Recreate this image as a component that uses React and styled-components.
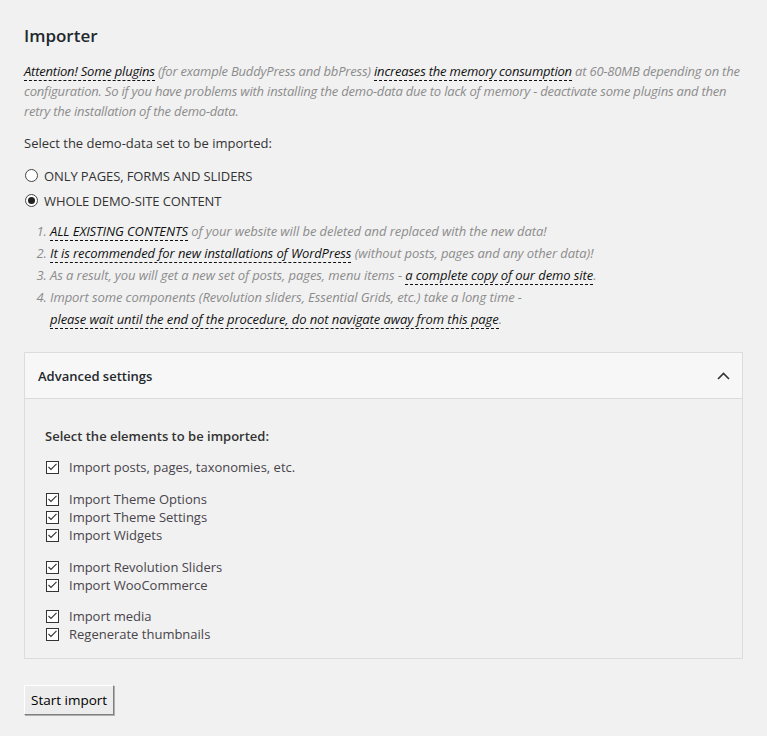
import React from "react";
import styled, { createGlobalStyle } from "styled-components";

const GlobalStyle = createGlobalStyle`
  body {
    margin: 0;
    background: #f1f1f1;
    font-family: "Open Sans", "Noto Sans", sans-serif;
    font-size: 13px;
    color: #333;
  }
`;

const Page = styled.div`
  padding: 24px 24px 20px;
`;

const Title = styled.h2`
  margin: 0;
  font-size: 17px;
  line-height: 24px;
  font-weight: 600;
  color: #23282d;
`;

const Note = styled.p`
  margin: 13px 0 0;
  font-style: italic;
  line-height: 20px;
  letter-spacing: -0.2px;
  color: #8c8c8c;
`;

const Mark = styled.span`
  color: #111;
  border-bottom: 1px dashed #111;
`;

const Label = styled.div`
  margin-top: ${(p) => p.$top ?? 12}px;
  line-height: 20px;
  font-weight: ${(p) => (p.$bold ? 600 : 400)};
  color: #333;
`;

const RadioList = styled.div`
  margin-top: 10px;
  display: flex;
  flex-direction: column;
`;

const RadioRow = styled.label`
  display: flex;
  align-items: center;
  gap: 6px;
  height: 25px;
  margin-left: 1px;
  text-transform: uppercase;
  letter-spacing: -0.1px;
  color: #333;
`;

const RadioDot = styled.span`
  width: 11px;
  height: 11px;
  border: 1px solid #444;
  border-radius: 50%;
  background: #fff;
  display: flex;
  align-items: center;
  justify-content: center;
  &::after {
    content: "";
    width: 7px;
    height: 7px;
    border-radius: 50%;
    background: #222;
    display: ${(p) => (p.$on ? "block" : "none")};
  }
`;

const Steps = styled.ol`
  margin: 7px 0 0;
  padding-left: 26px;
  font-style: italic;
  line-height: 22px;
  letter-spacing: -0.08px;
  color: #8c8c8c;
`;

const Panel = styled.section`
  margin-top: 22px;
  border: 1px solid #dcdcdc;
`;

const PanelHead = styled.div`
  display: flex;
  align-items: center;
  justify-content: space-between;
  padding: 13px 12px 12px 13px;
  line-height: 20px;
  font-weight: 600;
  color: #23282d;
  background: #f7f7f7;
  border-bottom: 1px solid #dcdcdc;
`;

const PanelBody = styled.div`
  padding: 27px 20px 15px;
`;

const Group = styled.div`
  margin-top: ${(p) => p.$top}px;
`;

const CheckRow = styled.label`
  display: flex;
  align-items: center;
  gap: 10px;
  height: 18px;
  margin-left: 1px;
  color: #48444c;
`;

const Box = styled.span`
  width: 11px;
  height: 11px;
  border: 1px solid #333;
  background: #fff;
  display: flex;
  align-items: center;
  justify-content: center;
`;

const Button = styled.button`
  margin-top: 26px;
  padding: 0 6px;
  height: 30px;
  font-family: inherit;
  font-size: 13.5px;
  color: #000;
  background: #ececec;
  border: 1px solid;
  border-color: #fff #808080 #808080 #fff;
  box-shadow: 1px 1px 0 #b0b0b0;
`;

function Check({ children }) {
  return (
    <CheckRow>
      <Box>
        <svg width="9" height="8" viewBox="0 0 9 8">
          <polyline points="0.5,4 3,6.5 8.5,0.8" fill="none" stroke="#333" strokeWidth="1.1" />
        </svg>
      </Box>
      {children}
    </CheckRow>
  );
}

const groups = [
  [12, ["Import posts, pages, taxonomies, etc."]],
  [14, ["Import Theme Options", "Import Theme Settings", "Import Widgets"]],
  [14, ["Import Revolution Sliders", "Import WooCommerce"]],
  [13, ["Import media", "Regenerate thumbnails"]],
];

export default function App() {
  return (
    <>
      <GlobalStyle />
      <Page>
        <Title>Importer</Title>
        <Note>
          <Mark>Attention! Some plugins</Mark> (for example BuddyPress and bbPress){" "}
          <Mark>increases the memory consumption</Mark> at 60-80MB depending on the
          configuration. So if you have problems with installing the demo-data due to lack
          of memory - deactivate some plugins and then retry the installation of the
          demo-data.
        </Note>
        <Label>Select the demo-data set to be imported:</Label>
        <RadioList>
          <RadioRow>
            <RadioDot />
            Only pages, forms and sliders
          </RadioRow>
          <RadioRow>
            <RadioDot $on />
            Whole demo-site content
          </RadioRow>
        </RadioList>
        <Steps>
          <li>
            <Mark>ALL EXISTING CONTENTS</Mark> of your website will be deleted and replaced
            with the new data!
          </li>
          <li>
            <Mark>It is recommended for new installations of WordPress</Mark> (without posts,
            pages and any other data)!
          </li>
          <li>
            As a result, you will get a new set of posts, pages, menu items -{" "}
            <Mark>a complete copy of our demo site</Mark>.
          </li>
          <li>
            Import some components (Revolution sliders, Essential Grids, etc.) take a long
            time -<br />
            <Mark>please wait until the end of the procedure, do not navigate away from this page</Mark>.
          </li>
        </Steps>
        <Panel>
          <PanelHead>
            Advanced settings
            <svg width="13" height="8" viewBox="0 0 13 8">
              <polyline points="1,7 6.5,1.5 12,7" fill="none" stroke="#333" strokeWidth="1.6" />
            </svg>
          </PanelHead>
          <PanelBody>
            <Label $bold $top={0}>Select the elements to be imported:</Label>
            {groups.map(([top, items]) => (
              <Group key={items[0]} $top={top}>
                {items.map((t) => (
                  <Check key={t}>{t}</Check>
                ))}
              </Group>
            ))}
          </PanelBody>
        </Panel>
        <Button>Start import</Button>
      </Page>
    </>
  );
}
